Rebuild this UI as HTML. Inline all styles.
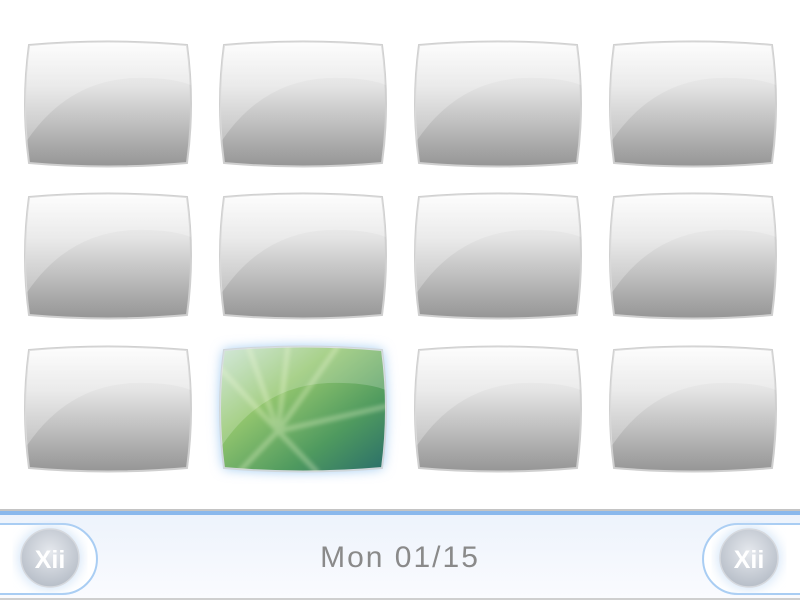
<!DOCTYPE html>
<html><head><meta charset="utf-8"><style>
html,body{margin:0;padding:0;width:800px;height:600px;overflow:hidden;background:#fff;font-family:"Liberation Sans",sans-serif}
svg{position:absolute;left:0;top:0}
.txt{position:absolute;left:0;width:800px;top:541px;text-align:center;font-size:30px;color:#8a8a8a;letter-spacing:2px}
</style></head><body>
<svg width="800" height="600" viewBox="0 0 800 600">
<defs>
<linearGradient id="g" x1="0" y1="0" x2="0" y2="1">
<stop offset="0" stop-color="#fdfdfd"/><stop offset="0.35" stop-color="#e4e4e4"/><stop offset="1" stop-color="#959595"/>
</linearGradient>
<linearGradient id="gr" x1="0" y1="0" x2="1" y2="1">
<stop offset="0" stop-color="#c9e3d2"/><stop offset="0.35" stop-color="#93c66e"/><stop offset="0.7" stop-color="#4f9a5f"/><stop offset="1" stop-color="#2a6e6a"/>
</linearGradient>
<linearGradient id="bar" x1="0" y1="0" x2="0" y2="1">
<stop offset="0" stop-color="#edf3fc"/><stop offset="1" stop-color="#fafbfe"/>
</linearGradient>
<radialGradient id="btn" cx="0.5" cy="0.4" r="0.6">
<stop offset="0" stop-color="#e6e9ee"/><stop offset="1" stop-color="#b7bec8"/>
</radialGradient>
<filter id="blur"><feGaussianBlur stdDeviation="6"/></filter>
<filter id="sb"><feGaussianBlur stdDeviation="2"/></filter>
<clipPath id="cp"><path d="M6,4 Q85,-3 164,4 Q172,63 164,122 Q85,129 6,122 Q-2,63 6,4 Z"/></clipPath>
<g id="t">
<path d="M6,4 Q85,-3 164,4 Q172,63 164,122 Q85,129 6,122 Q-2,63 6,4 Z" fill="url(#g)" stroke="#cfcfcf" stroke-width="2"/>
<path clip-path="url(#cp)" d="M0,0 L170,0 L170,45 Q150,36 110,37 Q45,40 5,98 L0,104 Z" fill="#fff" opacity="0.25"/>
</g>
</defs>
<use href="#t" x="23" y="41"/><use href="#t" x="218" y="41"/><use href="#t" x="413" y="41"/><use href="#t" x="608" y="41"/>
<use href="#t" x="23" y="193"/><use href="#t" x="218" y="193"/><use href="#t" x="413" y="193"/><use href="#t" x="608" y="193"/>
<use href="#t" x="23" y="346"/><use href="#t" x="413" y="346"/><use href="#t" x="608" y="346"/>
<g transform="translate(218,346)">
<path d="M6,4 Q85,-3 164,4 Q172,63 164,122 Q85,129 6,122 Q-2,63 6,4 Z" fill="#9cc8f0" filter="url(#blur)"/>
<path d="M6,4 Q85,-3 164,4 Q172,63 164,122 Q85,129 6,122 Q-2,63 6,4 Z" fill="url(#gr)" stroke="#cfd6da" stroke-width="2"/>
<g clip-path="url(#cp)"><g stroke="#eef8d0" stroke-width="5" opacity="0.35" filter="url(#sb)">
<line x1="60" y1="85" x2="0" y2="20"/><line x1="60" y1="85" x2="30" y2="0"/><line x1="60" y1="85" x2="70" y2="0"/><line x1="60" y1="85" x2="120" y2="0"/><line x1="60" y1="85" x2="170" y2="60"/><line x1="60" y1="85" x2="20" y2="127"/><line x1="60" y1="85" x2="100" y2="127"/>
</g></g>
<path clip-path="url(#cp)" d="M0,0 L170,0 L170,45 Q150,36 110,37 Q45,40 5,98 L0,104 Z" fill="#fff" opacity="0.2"/>
</g>
<rect x="0" y="509" width="800" height="2" fill="#c4c4c4"/>
<rect x="0" y="511" width="800" height="4" fill="#8ab8ec"/>
<rect x="0" y="515" width="800" height="83" fill="url(#bar)"/>
<rect x="0" y="598" width="800" height="2" fill="#cfcfcf"/>
<path d="M-2,524 L62,524 A35,35 0 0 1 62,594 L-2,594 Z" fill="#fff" stroke="#a9cdf3" stroke-width="2"/>
<path d="M802,524 L738,524 A35,35 0 0 0 738,594 L802,594 Z" fill="#fff" stroke="#a9cdf3" stroke-width="2"/>
<circle cx="50" cy="558" r="31" fill="#cfe2f7" filter="url(#blur)"/>
<circle cx="50" cy="558" r="29" fill="url(#btn)" stroke="#d6d9de" stroke-width="1.5"/>
<circle cx="749" cy="558" r="31" fill="#cfe2f7" filter="url(#blur)"/>
<circle cx="749" cy="558" r="29" fill="url(#btn)" stroke="#d6d9de" stroke-width="1.5"/>
<text x="50" y="568" text-anchor="middle" font-family="Liberation Sans" font-weight="bold" font-size="25" fill="#fff">Xii</text>
<text x="749" y="568" text-anchor="middle" font-family="Liberation Sans" font-weight="bold" font-size="25" fill="#fff">Xii</text>
</svg>
<div class="txt">Mon 01/15</div>
</body></html>
